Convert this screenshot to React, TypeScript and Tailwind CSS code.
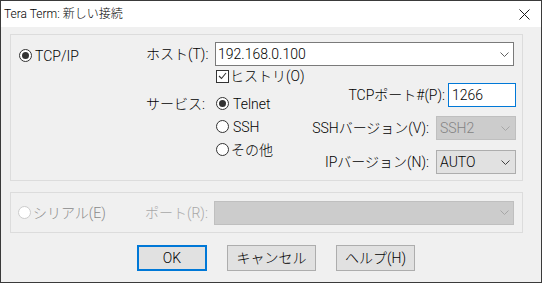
import React from 'react';

const Chevron = ({ color = '#606060' }: { color?: string }) => (
  <svg width="9" height="5" viewBox="0 0 9 5" className="shrink-0">
    <polyline points="0.5,0.5 4.5,4.5 8.5,0.5" fill="none" stroke={color} strokeWidth="1" />
  </svg>
);

const Radio = ({ checked, disabled }: { checked?: boolean; disabled?: boolean }) => (
  <span
    className={
      disabled
        ? 'w-[13px] h-[13px] rounded-full border border-[#cccccc] bg-white flex items-center justify-center shrink-0'
        : 'w-[13px] h-[13px] rounded-full border border-[#333333] bg-white flex items-center justify-center shrink-0'
    }
  >
    {checked && <span className="w-[7px] h-[7px] rounded-full bg-[#333333]" />}
  </span>
);

const Checkbox = () => (
  <span className="w-[13px] h-[13px] border border-[#333333] bg-white flex items-center justify-center shrink-0">
    <svg width="9" height="8" viewBox="0 0 9 8">
      <polyline points="1,4 3.5,6.5 8,1" fill="none" stroke="#333333" strokeWidth="1.1" />
    </svg>
  </span>
);

export default function App() {
  return (
    <div className="w-[542px] h-[283px] border border-[#3a3a3a] flex flex-col bg-[#f0f0f0] text-[14px] text-black font-light whitespace-nowrap font-['Roboto','Noto_Sans_CJK_JP',sans-serif] leading-none select-none">
      {/* title bar */}
      <div className="h-[26px] bg-white flex items-center justify-between pl-[3px] pr-[11px] shrink-0">
        <span className="text-[12px]">Tera Term: 新しい接続</span>
        <svg width="11" height="11" viewBox="0 0 11 11">
          <path d="M0.5 0.5 L10.5 10.5 M10.5 0.5 L0.5 10.5" stroke="#1a1a1a" strokeWidth="1" fill="none" />
        </svg>
      </div>

      {/* TCP/IP group */}
      <div className="ml-[9px] mr-[18px] mt-[7px] h-[147px] border border-[#dcdcdc] flex shrink-0">
        <div className="w-[135px] pl-[8px] pt-[14px]">
          <div className="flex items-center gap-[3px] h-[13px]">
            <Radio checked />
            <span>TCP/IP</span>
          </div>
        </div>
        <div className="flex-1 flex flex-col pt-[7px]">
          <div className="flex items-center h-[24px]">
            <span className="w-[69px]">ホスト(T):</span>
            <div className="w-[299px] h-[24px] bg-white border border-[#7a7a7a] flex items-center pl-[2px] pr-[4px]">
              <span className="flex-1">192.168.0.100</span>
              <Chevron color="#606060" />
            </div>
          </div>
          <div className="flex">
            <div className="w-[154px] flex flex-col">
              <div className="h-[20px] flex items-center pl-[70px] gap-[1px]">
                <Checkbox />
                <span>ヒストリ(O)</span>
              </div>
              <div className="h-[23px] mt-[6px] flex items-center">
                <span className="w-[70px]">サービス:</span>
                <Radio checked />
                <span className="ml-[4px]">Telnet</span>
              </div>
              <div className="h-[23px] flex items-center pl-[70px] gap-[4px]">
                <Radio />
                <span>SSH</span>
              </div>
              <div className="h-[23px] flex items-center pl-[70px] gap-[2px]">
                <Radio />
                <span>その他</span>
              </div>
            </div>
            <div className="flex-1 flex flex-col items-end pr-[6px]">
              <div className="mt-[17px] h-[24px] flex items-center">
                <span>TCPポート#(P):</span>
                <div className="ml-[3px] w-[68px] h-[24px] bg-white border border-[#0078d7] flex items-center pl-[3px]">
                  1266
                </div>
              </div>
              <div className="mt-[9px] h-[24px] flex items-center">
                <span>SSHバージョン(V):</span>
                <div className="ml-[7px] w-[80px] h-[24px] bg-[#cccccc] border border-[#bfbfbf] flex items-center pl-[3px] pr-[5px] text-[#838383]">
                  <span className="flex-1">SSH2</span>
                  <Chevron color="#a6a6a6" />
                </div>
              </div>
              <div className="mt-[10px] h-[24px] flex items-center">
                <span>IPバージョン(N):</span>
                <div className="ml-[7px] w-[80px] h-[24px] bg-[#e1e1e1] border border-[#adadad] flex items-center pl-[3px] pr-[5px]">
                  <span className="flex-1">AUTO</span>
                  <Chevron color="#404040" />
                </div>
              </div>
            </div>
          </div>
        </div>
      </div>

      {/* serial group */}
      <div className="ml-[9px] mr-[18px] mt-[11px] h-[41px] border border-[#dcdcdc] flex items-center shrink-0">
        <div className="w-[134px] pl-[7px] flex items-center gap-[2px] text-[#8a8a8a]">
          <Radio disabled />
          <span>シリアル(E)</span>
        </div>
        <span className="w-[69px] text-[#a8a8a8]">ポート(R):</span>
        <div className="w-[300px] h-[24px] bg-[#cccccc] border border-[#bfbfbf] flex items-center justify-end pr-[4px]">
          <Chevron color="#a6a6a6" />
        </div>
      </div>

      {/* buttons */}
      <div className="mt-[12px] flex pl-[136px] gap-[20px] shrink-0">
        <button className="w-[70px] h-[26px] bg-[#e1e1e1] border-2 border-[#0078d7] flex items-center justify-center">
          OK
        </button>
        <button className="w-[89px] h-[26px] bg-[#e1e1e1] border border-[#adadad] flex items-center justify-center">
          キャンセル
        </button>
        <button className="w-[79px] h-[26px] bg-[#e1e1e1] border border-[#adadad] flex items-center justify-center">
          ヘルプ(H)
        </button>
      </div>
    </div>
  );
}
